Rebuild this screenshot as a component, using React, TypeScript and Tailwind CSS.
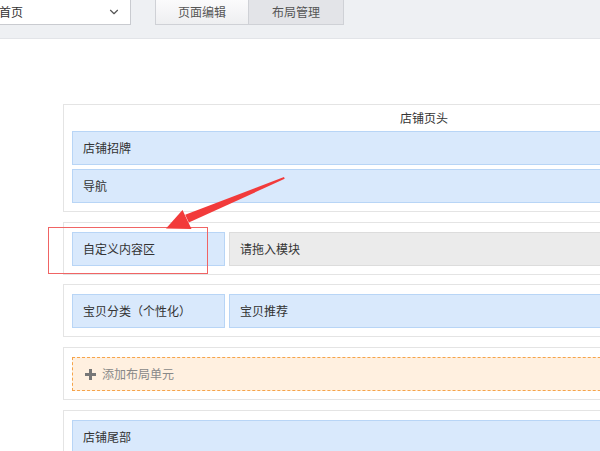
import { ChevronDown } from 'lucide-react';

const font = { fontFamily: '"Noto Sans CJK SC", "Noto Sans", sans-serif' };

function BlueBox({ label, className = '' }: { label: string; className?: string }) {
  return (
    <div className={`h-[34px] flex items-center pl-[10px] bg-[#d9e9fc] border border-[#b8d5f6] text-[12px] text-[#333] ${className}`}>
      {label}
    </div>
  );
}

function Arrow() {
  // tail (284,178) -> tip (167,228)
  return (
    <svg className="absolute left-0 top-0 pointer-events-none" width="600" height="451">
      <polygon points="284,177 284.7,178.8 188.8,222.6 185.2,214.8" fill="#f23b3b" />
      <polygon points="166,228.5 182.5,210 191.5,229" fill="#f23b3b" />
    </svg>
  );
}

export default function App() {
  return (
    <div className="w-[600px] h-[451px] overflow-hidden relative bg-white" style={font}>
      {/* top bar */}
      <div className="h-[39px] bg-[#eef0f3] border-b border-[#e2e4e8] flex items-start">
        <div className="ml-[-12px] w-[143px] h-[25px] bg-white border border-t-0 border-[#c9cbd0] flex items-center justify-between pl-[10px] pr-[9px] text-[12px] text-[#333]">
          <span>首页</span>
          <ChevronDown size={14} strokeWidth={2} className="text-[#555]" />
        </div>
        <div className="ml-[24px] flex h-[25px]">
          <div className="w-[94px] flex items-center justify-center border border-t-0 border-[#cfd1d6] bg-gradient-to-b from-[#fbfbfc] to-[#eeeff1] text-[12px] text-[#555]">
            页面编辑
          </div>
          <div className="w-[95px] flex items-center justify-center border border-t-0 border-l-0 border-[#cfd1d6] bg-[#e3e4e8] text-[12px] text-[#555]">
            布局管理
          </div>
        </div>
      </div>

      {/* layout area */}
      <div className="pl-[63px] pt-[65px] flex flex-col">
        <div className="w-[722px] border border-[#e4e4e4] px-[8px] pb-[8px]">
          <div className="h-[26px] flex items-center justify-center text-[12px] text-[#333]">店铺页头</div>
          <div className="flex flex-col gap-[4px]">
            <BlueBox label="店铺招牌" />
            <BlueBox label="导航" />
          </div>
        </div>

        <div className="w-[722px] mt-[10px] border border-[#e4e4e4] px-[8px] pt-[9px] pb-[8px] flex gap-[4px]">
          <BlueBox label="自定义内容区" className="w-[153px] shrink-0" />
          <div className="flex-1 h-[34px] flex items-center pl-[10px] bg-[#ebebeb] border border-[#dcdcdc] text-[12px] text-[#333]">
            请拖入模块
          </div>
        </div>

        <div className="w-[722px] mt-[9px] border border-[#e4e4e4] px-[8px] pt-[9px] pb-[8px] flex gap-[4px]">
          <BlueBox label="宝贝分类（个性化）" className="w-[153px] shrink-0" />
          <BlueBox label="宝贝推荐" className="flex-1" />
        </div>

        <div className="w-[722px] mt-[10px] border border-[#e4e4e4] px-[8px] pt-[9px] pb-[8px]">
          <div className="h-[34px] flex items-center pl-[12px] gap-[6px] bg-[#fff0e0] border border-dashed border-[#f6a44a] text-[12px] text-[#888]">
            <svg width="11" height="11" viewBox="0 0 11 11">
              <rect x="4" y="0" width="3" height="11" fill="#777" />
              <rect x="0" y="4" width="11" height="3" fill="#777" />
            </svg>
            添加布局单元
          </div>
        </div>

        <div className="w-[722px] mt-[10px] border border-[#e4e4e4] px-[8px] pt-[9px] pb-[8px]">
          <BlueBox label="店铺尾部" />
        </div>
      </div>

      {/* annotation */}
      <div className="absolute left-[48px] top-[227px] w-[160px] h-[47px] border border-[#f06464]" />
      <Arrow />
    </div>
  );
}
